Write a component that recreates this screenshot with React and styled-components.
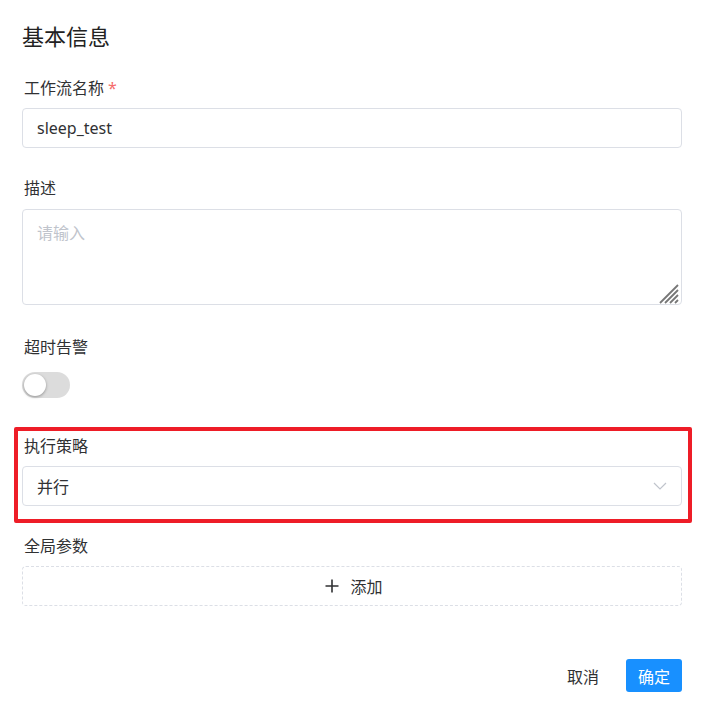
import React, { useState } from "react";
import styled, { createGlobalStyle } from "styled-components";

const GlobalStyle = createGlobalStyle`
  body {
    margin: 0;
    background: #fff;
    font-family: "Noto Sans", "Noto Sans CJK SC", sans-serif;
    color: #303133;
  }
  * {
    box-sizing: border-box;
  }
`;

const Page = styled.div`
  width: 707px;
  padding: 21px 25px 20px 22px;
`;

const Title = styled.h2`
  margin: 0 0 25px;
  font-size: 22px;
  font-weight: 400;
  line-height: 30px;
  color: #222;
`;

const Item = styled.div`
  margin-bottom: ${(p) => p.$gap ?? 28}px;
`;

const Label = styled.div`
  font-size: 16px;
  line-height: 24px;
  margin: 0 0 ${(p) => p.$space ?? 8}px 2px;
  color: #303133;
  .req {
    color: #f56c6c;
    margin-left: 4px;
  }
`;

const Input = styled.input`
  display: block;
  width: 100%;
  height: 40px;
  padding: 0 14px;
  border: 1px solid #dcdfe6;
  border-radius: 4px;
  font: inherit;
  font-size: 16px;
  color: #303133;
  outline: none;
`;

const AreaWrap = styled.div`
  position: relative;
`;

const TextArea = styled.textarea`
  display: block;
  width: 100%;
  height: 96px;
  padding: 10px 14px;
  border: 1px solid #dcdfe6;
  border-radius: 4px;
  font: inherit;
  font-size: 16px;
  color: #303133;
  outline: none;
  resize: none;
  &::placeholder {
    color: #c0c4cc;
  }
`;

const Grip = styled.svg`
  position: absolute;
  right: 2px;
  bottom: 1px;
  pointer-events: none;
`;

const Switch = styled.button`
  position: relative;
  display: block;
  width: 48px;
  height: 26px;
  padding: 0;
  border: none;
  border-radius: 13px;
  background: ${(p) => (p.$on ? "#1890ff" : "#dcdcdc")};
  cursor: pointer;
  &::after {
    content: "";
    position: absolute;
    top: 2px;
    left: ${(p) => (p.$on ? "24px" : "2px")};
    width: 22px;
    height: 22px;
    border-radius: 50%;
    background: #fff;
    box-shadow: 0 1px 3px rgba(0, 0, 0, 0.35);
  }
`;

const Highlight = styled.div`
  margin: 0 -10px 11px -8px;
  padding: 3px 6px 13px 4px;
  border: 4px solid #ee1d27;
  border-radius: 2px;
`;

const Select = styled.div`
  display: flex;
  align-items: center;
  justify-content: space-between;
  height: 40px;
  padding: 0 14px;
  border: 1px solid #dcdfe6;
  border-radius: 4px;
  font-size: 16px;
  color: #303133;
  cursor: pointer;
`;

const AddButton = styled.button`
  display: flex;
  align-items: center;
  justify-content: center;
  gap: 11px;
  width: 100%;
  height: 40px;
  padding: 0 0 0 4px;
  border: 1px dashed #dcdfe6;
  border-radius: 4px;
  background: #fff;
  font: inherit;
  font-size: 16px;
  color: #303133;
  cursor: pointer;
`;

const Footer = styled.div`
  display: flex;
  justify-content: flex-end;
  gap: 15px;
  margin-top: 53px;
`;

const Button = styled.button`
  height: 33px;
  padding: 0 12px;
  border: none;
  border-radius: 3px;
  font: inherit;
  font-size: 16px;
  background: ${(p) => (p.$primary ? "#1890ff" : "transparent")};
  color: ${(p) => (p.$primary ? "#fff" : "#303133")};
  cursor: pointer;
`;

function Chevron() {
  return (
    <svg width="14" height="8" viewBox="0 0 14 8" fill="none">
      <path d="M1 1l6 6 6-6" stroke="#c0c4cc" strokeWidth="1.2" />
    </svg>
  );
}

function PlusIcon() {
  return (
    <svg width="14" height="14" viewBox="0 0 14 14" fill="none">
      <path d="M7 0.5v13M0.5 7h13" stroke="#303133" strokeWidth="1.6" />
    </svg>
  );
}

export default function App() {
  const [alarm, setAlarm] = useState(false);
  return (
    <Page>
      <GlobalStyle />
      <Title>基本信息</Title>
      <Item>
        <Label>
          工作流名称<span className="req">*</span>
        </Label>
        <Input defaultValue="sleep_test" />
      </Item>
      <Item $gap={30}>
        <Label $space={9}>描述</Label>
        <AreaWrap>
          <TextArea placeholder="请输入" />
          <Grip width="22" height="20" viewBox="0 0 22 20" fill="none">
            <path
              d="M2 19L20 1M7 19L20 6M12 19L20 11M17 19L20 16"
              stroke="#777"
              strokeWidth="1.8"
            />
          </Grip>
        </AreaWrap>
      </Item>
      <Item $gap={29}>
        <Label $space={13}>超时告警</Label>
        <Switch $on={alarm} onClick={() => setAlarm(!alarm)} />
      </Item>
      <Highlight>
        <Label>执行策略</Label>
        <Select>
          <span>并行</span>
          <Chevron />
        </Select>
      </Highlight>
      <Item $gap={0}>
        <Label>全局参数</Label>
        <AddButton>
          <PlusIcon />
          <span>添加</span>
        </AddButton>
      </Item>
      <Footer>
        <Button>取消</Button>
        <Button $primary>确定</Button>
      </Footer>
    </Page>
  );
}
